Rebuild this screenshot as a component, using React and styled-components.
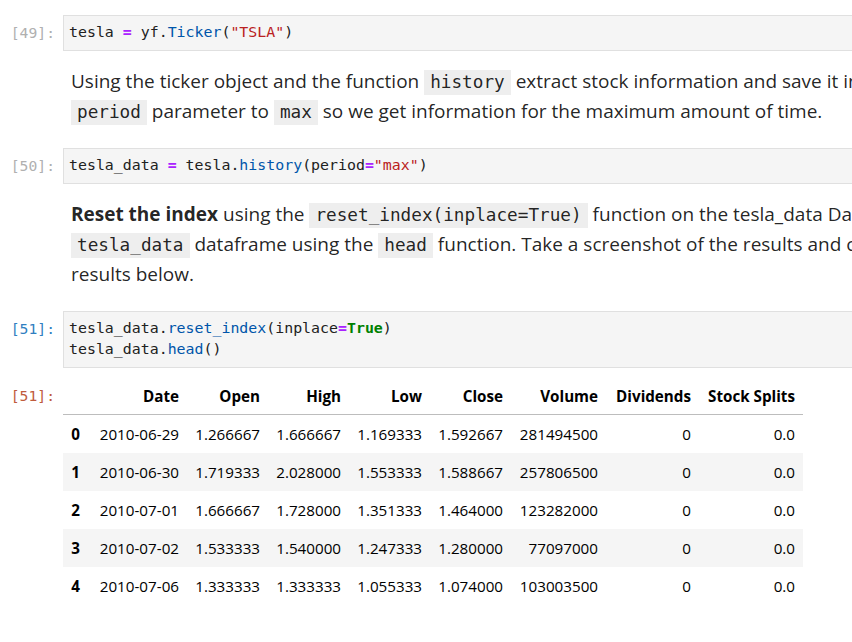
import React from "react";
import styled, { createGlobalStyle } from "styled-components";

const Global = createGlobalStyle`
  html, body { margin: 0; padding: 0; background: #fff; overflow: hidden; }
  body { font-family: "Open Sans", "Noto Sans", sans-serif; color: rgba(0,0,0,0.87); }
`;

const Notebook = styled.div`
  width: 1100px;
  padding-top: 15px;
  display: flex;
  flex-direction: column;
`;

const Cell = styled.div`
  display: flex;
  align-items: flex-start;
  margin-bottom: ${(p) => p.$mb || 0}px;
`;

const Prompt = styled.div`
  width: 55px;
  flex: none;
  box-sizing: border-box;
  padding-top: ${(p) => p.$pt || 7}px;
  margin-right: 8px;
  text-align: right;
  font-family: "DejaVu Sans Mono", monospace;
  font-size: 14.7px;
  line-height: 21px;
  color: ${(p) =>
    p.$kind === "out" ? "#bf5b3d" : p.$kind === "active" ? "#307fc1" : "#b0b0b0"};
`;

const CodeBox = styled.pre`
  flex: 1;
  margin: 0;
  padding: 6px 5px 7px;
  background: #f5f5f5;
  border: 1px solid #e0e0e0;
  font-family: "DejaVu Sans Mono", monospace;
  font-size: 14.9px;
  line-height: 21px;
  color: #212121;
`;

const Op = styled.span`
  color: #aa22ff;
  font-weight: bold;
`;
const Prop = styled.span`
  color: #0055aa;
`;
const Str = styled.span`
  color: #ba2121;
`;
const Kw = styled.span`
  color: #008000;
  font-weight: bold;
`;

const Markdown = styled.div`
  padding-left: 8px;
  margin-left: 63px;
  margin-bottom: 22px;
  font-size: 19px;
  line-height: 30px;
  white-space: nowrap;
`;

const InlineCode = styled.code`
  font-family: "DejaVu Sans Mono", monospace;
  font-size: 17.7px;
  line-height: 1;
  background: #eeeeee;
  padding: 2px 6px 3px;
`;

const Table = styled.table`
  width: 740px;
  border-collapse: collapse;
  border-spacing: 0;
  font-size: 15.2px;
  color: #000;
  table-layout: fixed;
`;

const Th = styled.th`
  text-align: right;
  font-weight: bold;
  padding: 0 8px;
  height: 37px;
  border-bottom: 1px solid #bdbdbd;
  vertical-align: middle;
  white-space: nowrap;
`;

const Tr = styled.tr`
  background: ${(p) => (p.$odd ? "#f5f5f5" : "transparent")};
`;

const Td = styled.td`
  text-align: right;
  padding: 0 8px;
  height: 38px;
  vertical-align: middle;
  white-space: nowrap;
  font-weight: ${(p) => (p.$bold ? "bold" : "normal")};
`;

const widths = [25, 99, 81, 81, 81, 81, 95, 93, 104];
const headers = ["", "Date", "Open", "High", "Low", "Close", "Volume", "Dividends", "Stock Splits"];
const rows = [
  ["0", "2010-06-29", "1.266667", "1.666667", "1.169333", "1.592667", "281494500", "0", "0.0"],
  ["1", "2010-06-30", "1.719333", "2.028000", "1.553333", "1.588667", "257806500", "0", "0.0"],
  ["2", "2010-07-01", "1.666667", "1.728000", "1.351333", "1.464000", "123282000", "0", "0.0"],
  ["3", "2010-07-02", "1.533333", "1.540000", "1.247333", "1.280000", "77097000", "0", "0.0"],
  ["4", "2010-07-06", "1.333333", "1.333333", "1.055333", "1.074000", "103003500", "0", "0.0"],
];

export default function App() {
  return (
    <>
      <Global />
      <Notebook>
        <Cell $mb={15}>
          <Prompt>[49]:</Prompt>
          <CodeBox>
            tesla <Op>=</Op> yf.<Prop>Ticker</Prop>(<Str>"TSLA"</Str>)
          </CodeBox>
        </Cell>
        <Markdown>
          Using the ticker object and the function <InlineCode>history</InlineCode> extract stock
          information and save it in a dataframe named <InlineCode>tesla_data</InlineCode>. Set the
          <br />
          <InlineCode>period</InlineCode> parameter to <InlineCode>max</InlineCode> so we get
          information for the maximum amount of time.
        </Markdown>
        <Cell $mb={15}>
          <Prompt>[50]:</Prompt>
          <CodeBox>
            tesla_data <Op>=</Op> tesla.<Prop>history</Prop>(period<Op>=</Op>
            <Str>"max"</Str>)
          </CodeBox>
        </Cell>
        <Markdown>
          <b>Reset the index</b> using the <InlineCode>reset_index(inplace=True)</InlineCode> function
          on the tesla_data DataFrame and display the first five rows of the
          <br />
          <InlineCode>tesla_data</InlineCode> dataframe using the <InlineCode>head</InlineCode>{" "}
          function. Take a screenshot of the results and code from the beginning of Question 1 to the
          <br />
          results below.
        </Markdown>
        <Cell $mb={9}>
          <Prompt $kind="active">[51]:</Prompt>
          <CodeBox>
            tesla_data.<Prop>reset_index</Prop>(inplace<Op>=</Op>
            <Kw>True</Kw>)
            {"\n"}tesla_data.<Prop>head</Prop>()
          </CodeBox>
        </Cell>
        <Cell>
          <Prompt $kind="out" $pt={8}>[51]:</Prompt>
          <Table>
            <colgroup>
              {widths.map((w, i) => (
                <col key={i} style={{ width: w }} />
              ))}
            </colgroup>
            <thead>
              <tr>
                {headers.map((h, i) => (
                  <Th key={i}>{h}</Th>
                ))}
              </tr>
            </thead>
            <tbody>
              {rows.map((r, ri) => (
                <Tr key={ri} $odd={ri % 2 === 1}>
                  {r.map((c, ci) => (
                    <Td key={ci} $bold={ci === 0}>
                      {c}
                    </Td>
                  ))}
                </Tr>
              ))}
            </tbody>
          </Table>
        </Cell>
      </Notebook>
    </>
  );
}
